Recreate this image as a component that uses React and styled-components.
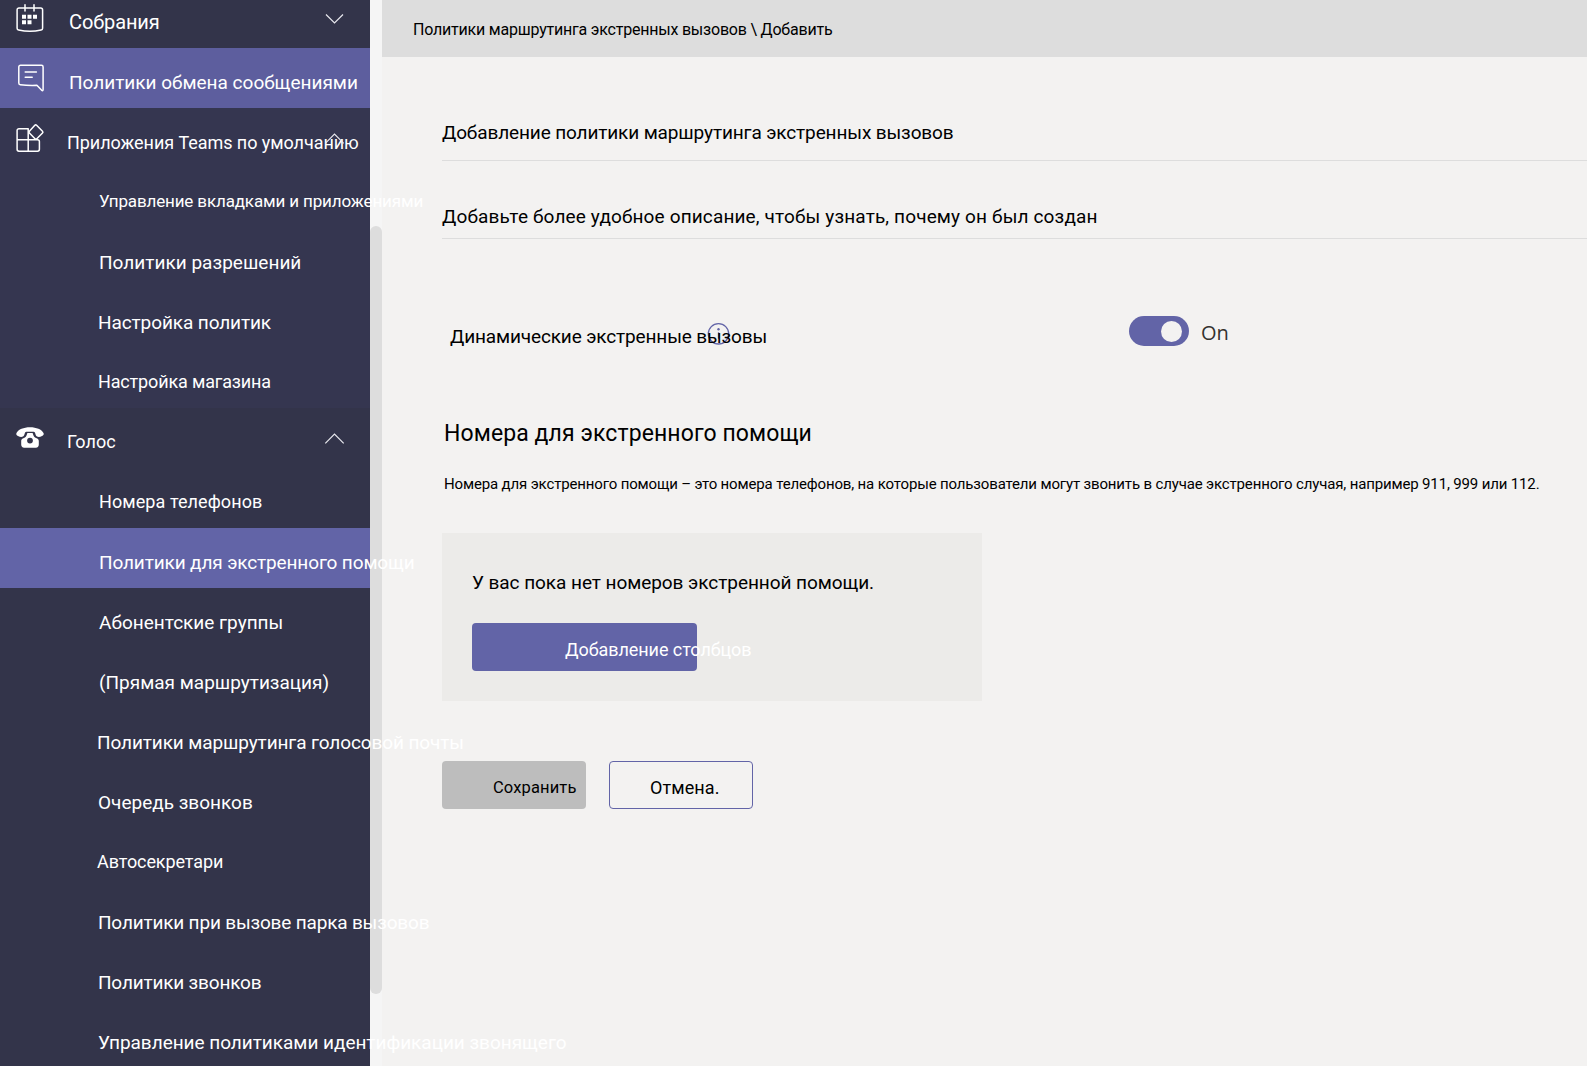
import React from 'react';
import styled, { createGlobalStyle } from 'styled-components';

const GlobalStyle = createGlobalStyle`
  html, body { height: 100%; }
  body {
    margin: 0;
    overflow: hidden;
    background: #f3f2f1;
    font-family: Roboto, 'Noto Sans', sans-serif;
    color: #000;
  }
  *, *::before, *::after { box-sizing: border-box; }
`;

const Page = styled.div`
  display: flex;
  width: 100%;
  height: 100vh;
  overflow: hidden;
`;

/* ---------- sidebar ---------- */

const Sidebar = styled.nav`
  position: relative;
  z-index: 1;
  flex: 0 0 370px;
  min-width: 0;
  width: 370px;
  height: 100%;
  background: #33344a;
  color: #fff;
`;

const NavList = styled.div`
  display: flex;
  flex-direction: column;
  width: 370px;
  margin-top: -12px;
`;

const rowColors = {
  base: '#33344a',
  group: '#353650',
  soft: '#5d5e9e',
  active: '#6264a7',
};

const NavRow = styled.div`
  position: relative;
  display: flex;
  flex: 0 0 60px;
  width: 370px;
  height: 60px;
  padding-left: ${p => p.$x}px;
  background: ${p => rowColors[p.$tone]};
`;

const NavLabel = styled.span`
  flex: none;
  height: 60px;
  margin-top: ${p => p.$dy}px;
  font-size: ${p => p.$size}px;
  line-height: ${p => (p.$size === 18 || p.$size === 19 ? 61 : 60)}px;
  letter-spacing: ${p => p.$ls}px;
  white-space: nowrap;
`;

const NavIcon = styled.svg`
  position: absolute;
  left: 15px;
  top: 15px;
  width: 30px;
  height: 30px;
  fill: none;
  stroke: #fff;
  stroke-width: 1.5;
  stroke-linejoin: round;
  stroke-linecap: round;
`;

const Chevron = styled.svg`
  position: absolute;
  left: 324px;
  top: 25px;
  width: 21px;
  height: 12px;
  fill: none;
  stroke: #e8e8ee;
  stroke-width: 1.2;
`;

const ScrollTrack = styled.div`
  flex: 0 0 12px;
  height: 100%;
  padding-top: 226px;
  background: #f5f5f5;
`;

const ScrollThumb = styled.div`
  height: 768px;
  border-radius: 6px;
  background: #dddddd;
`;

/* ---------- main ---------- */

const Main = styled.main`
  flex: 1;
  min-width: 0;
  overflow: hidden;
  background: #f3f2f1;
`;

const Breadcrumb = styled.header`
  height: 57px;
  padding: 1px 0 0 31px;
  background: #dddddd;
  font-size: 16px;
  line-height: 57px;
  letter-spacing: -0.21px;
  white-space: nowrap;
`;

const Content = styled.div`
  display: flex;
  flex-direction: column;
  padding-left: 60px;
`;

const Field = styled.div`
  padding: ${p => p.$top}px 0 ${p => p.$bottom}px;
  border-bottom: 1px solid #dddddd;
  font-size: 19px;
  line-height: 23px;
  letter-spacing: ${p => p.$ls}px;
  white-space: nowrap;
`;

const SettingRow = styled.div`
  display: flex;
  height: 30px;
  margin-top: 77px;
  padding-left: 8px;
`;

const SettingLabel = styled.div`
  position: relative;
  isolation: isolate;
  flex: 0 0 679px;
  padding-top: 9px;
  font-size: 19px;
  line-height: 23px;
  letter-spacing: -0.14px;
`;

const InfoIcon = styled.svg`
  position: absolute;
  left: 257px;
  top: 6px;
  z-index: -1;
  width: 23px;
  height: 23px;
  fill: none;
  stroke: #6264a7;
  stroke-width: 1.3;
`;

const Toggle = styled.div`
  display: flex;
  align-items: center;
  justify-content: flex-end;
  width: 60px;
  height: 30px;
  padding-right: 7px;
  border-radius: 15px;
  background: #6264a7;
`;

const Knob = styled.span`
  width: 21px;
  height: 21px;
  border-radius: 50%;
  background: #f3f2f1;
`;

const ToggleText = styled.span`
  margin-left: 12px;
  padding-top: 3px;
  font-family: 'Open Sans', sans-serif;
  font-size: 20px;
  line-height: 28px;
  color: #33322f;
`;

const Heading = styled.h2`
  margin: 74px 0 0 2px;
  font-size: 23px;
  font-weight: 400;
  line-height: 27px;
  letter-spacing: 0.1px;
`;

const Description = styled.p`
  margin: 28px 0 0 2px;
  font-size: 15px;
  line-height: 18px;
  letter-spacing: -0.15px;
  white-space: nowrap;
`;

const Card = styled.section`
  width: 540px;
  height: 168px;
  margin-top: 40px;
  padding: 38px 30px 30px;
  background: #ecebe9;
`;

const CardText = styled.div`
  font-size: 19px;
  line-height: 23px;
  letter-spacing: -0.06px;
  white-space: nowrap;
`;

const Button = styled.button`
  display: block;
  width: ${p => p.$w}px;
  height: 48px;
  margin: ${p => p.$mt || 0}px 0 0;
  padding: ${p => p.$pad};
  border: ${p => (p.$outline ? '1px solid #6264a7' : '0')};
  border-radius: 4px;
  background: ${p => p.$bg};
  color: ${p => p.$color};
  font-family: inherit;
  font-size: ${p => p.$size}px;
  line-height: 21px;
  letter-spacing: ${p => p.$ls}px;
  text-align: left;
  white-space: nowrap;
`;

const ButtonText = styled.span`
  display: block;
  height: 21px;
`;

const Actions = styled.div`
  display: flex;
  gap: 23px;
  margin-top: 60px;
`;

/* ---------- icons ---------- */

const CalendarIcon = () => (
  <NavIcon viewBox="0 0 30 30">
    <path d="M4 5h21.700a1.900 1.900 0 0 1 1.900 1.900v18.300a1.800 1.800 0 0 1-1.500 1.800q-11 2.400-22.500 0a1.800 1.800 0 0 1-1.500-1.800V6.900A1.900 1.900 0 0 1 4 5z" />
    <path d="M10 1.800v6.200M19 1.800v6.200" />
    <path
      d="M7 11.800h4v4H7zM12.500 11.800h4v4h-4zM18 11.800h4v4h-4zM7 17.300h4v4H7zM12.500 17.300h4v4h-4z"
      fill="#fff"
      stroke="none"
    />
  </NavIcon>
);

const MessageIcon = () => (
  <NavIcon viewBox="0 0 30 30">
    <path d="M5.500 2.300h21a1.600 1.600 0 0 1 1.600 1.600v22.600q0 1.800-1.400.8l-4.800-5Q13 22.600 5.300 21.800a1.700 1.700 0 0 1-1.500-1.700V4a1.700 1.700 0 0 1 1.700-1.700z" />
    <path d="M10.200 9h11.200M10.200 14.200h7" />
  </NavIcon>
);

const AppsIcon = () => (
  <NavIcon viewBox="0 0 30 30">
    <path d="M13.200 5.700H4a1.900 1.900 0 0 0-1.900 1.900v18.700A1.900 1.900 0 0 0 4 28.200h18.500a1.900 1.900 0 0 0 1.900-1.900v-7.700a1.900 1.900 0 0 0-1.900-1.900H2.100M13.200 5.700v22.500" />
    <path d="m21.600 2.300 5.900 5.900a1.300 1.300 0 0 1 0 1.800l-5.700 5.700a1.300 1.300 0 0 1-1.800 0l-5.600-5.700a1.300 1.300 0 0 1 0-1.800l5.400-5.900a1.300 1.300 0 0 1 1.800 0z" />
  </NavIcon>
);

const PhoneIcon = () => (
  <NavIcon viewBox="0 0 30 30">
    <g fill="#fff" stroke="none">
      <path d="M15 4.300c6.500 0 11.600 2.200 13.500 5.700.7 1.300-.1 2.300-1.500 3.100-1.600.9-3.600 1.300-5 .5-1.500-.8-1.400-2.700-2-3.900-.3-.7-1-.9-1.800-.9h-6.400c-.8 0-1.500.2-1.800.9-.6 1.200-.5 3.100-2 3.900-1.400.8-3.400.4-5-.5-1.400-.8-2.200-1.800-1.500-3.100C3.400 6.500 8.500 4.300 15 4.300z" />
      <path
        fillRule="evenodd"
        d="M12.400 10h5.200l.9 2.600c.4 1.200 1.200 1.900 2.500 2.300 2 .6 2.800 1.500 2.800 3v3.700c0 2-1 3.200-3 3.200H9.200c-2 0-3-1.200-3-3.200v-3.700c0-1.500.8-2.400 2.800-3 1.300-.4 2.100-1.100 2.500-2.300zM15 14.700a2.900 2.900 0 1 0 0 5.800 2.900 2.900 0 0 0 0-5.800z"
      />
    </g>
  </NavIcon>
);

const ChevronMark = ({ dir }) => (
  <Chevron viewBox="0 0 21 12">
    <path d={dir === 'down' ? 'M2 1.500 10.500 10 19 1.500' : 'M1.300 10.300 10.500 1 19.700 10.300'} />
  </Chevron>
);

/* ---------- data ---------- */

const navItems = [
  { text: 'Собрания', tone: 'base', x: 69, size: 20, ls: -0.1, dy: 4, icon: <CalendarIcon />, chevron: 'down' },
  { text: 'Политики обмена сообщениями', tone: 'soft', x: 69, size: 19, ls: 0, dy: 4, icon: <MessageIcon /> },
  { text: 'Приложения Teams по умолчанию', tone: 'group', x: 67, size: 18, ls: -0.06, dy: 4, icon: <AppsIcon />, chevron: 'up' },
  { text: 'Управление вкладками и приложениями', tone: 'group', x: 99, size: 17, ls: -0.14, dy: 3 },
  { text: 'Политики разрешений', tone: 'group', x: 99, size: 19, ls: 0.02, dy: 4 },
  { text: 'Настройка политик', tone: 'group', x: 98, size: 19, ls: -0.1, dy: 4 },
  { text: 'Настройка магазина', tone: 'group', x: 98, size: 18, ls: -0.15, dy: 3 },
  { text: 'Голос', tone: 'base', x: 67, size: 18, ls: 0, dy: 3, icon: <PhoneIcon />, chevron: 'up' },
  { text: 'Номера телефонов', tone: 'base', x: 99, size: 18, ls: 0.08, dy: 3 },
  { text: 'Политики для экстренного помощи', tone: 'active', x: 99, size: 19, ls: -0.13, dy: 4 },
  { text: 'Абонентские группы', tone: 'base', x: 99, size: 19, ls: 0, dy: 4 },
  { text: '(Прямая маршрутизация)', tone: 'base', x: 99, size: 19, ls: 0, dy: 4 },
  { text: 'Политики маршрутинга голосовой почты', tone: 'base', x: 97, size: 19, ls: -0.11, dy: 4 },
  { text: 'Очередь звонков', tone: 'base', x: 98, size: 19, ls: 0, dy: 4 },
  { text: 'Автосекретари', tone: 'base', x: 97, size: 18, ls: -0.1, dy: 3 },
  { text: 'Политики при вызове парка вызовов', tone: 'base', x: 98, size: 19, ls: -0.18, dy: 4 },
  { text: 'Политики звонков', tone: 'base', x: 98, size: 19, ls: -0.18, dy: 4 },
  { text: 'Управление политиками идентификации звонящего', tone: 'base', x: 98, size: 19, ls: -0.03, dy: 4 },
];

export default function App() {
  return (
    <Page>
      <GlobalStyle />
      <Sidebar>
        <NavList>
          {navItems.map(item => (
            <NavRow key={item.text} $tone={item.tone} $x={item.x}>
              {item.icon}
              <NavLabel $size={item.size} $ls={item.ls} $dy={item.dy}>
                {item.text}
              </NavLabel>
              {item.chevron && <ChevronMark dir={item.chevron} />}
            </NavRow>
          ))}
        </NavList>
      </Sidebar>
      <ScrollTrack>
        <ScrollThumb />
      </ScrollTrack>
      <Main>
        <Breadcrumb>{'Политики маршрутинга экстренных вызовов \\ Добавить'}</Breadcrumb>
        <Content>
          <Field $top={64} $bottom={16} $ls={-0.13}>
            Добавление политики маршрутинга экстренных вызовов
          </Field>
          <Field $top={44} $bottom={10} $ls={0.14}>
            Добавьте более удобное описание, чтобы узнать, почему он был создан
          </Field>
          <SettingRow>
            <SettingLabel>
              Динамические экстренные вызовы
              <InfoIcon viewBox="0 0 23 23">
                <circle cx="11.500" cy="11.800" r="10.200" />
                <path d="M11.500 10.300v6.400" />
                <circle cx="11.500" cy="7.300" r="1.200" fill="#6264a7" stroke="none" />
              </InfoIcon>
            </SettingLabel>
            <Toggle>
              <Knob />
            </Toggle>
            <ToggleText>On</ToggleText>
          </SettingRow>
          <Heading>Номера для экстренного помощи</Heading>
          <Description>
            Номера для экстренного помощи – это номера телефонов, на которые пользователи могут звонить в
            случае экстренного случая, например 911, 999 или 112.
          </Description>
          <Card>
            <CardText>У вас пока нет номеров экстренной помощи.</CardText>
            <Button $w={225} $mt={29} $pad="4px 0 0 93px" $bg="#6264a7" $color="#fff" $size={18} $ls={-0.07}>
              <ButtonText>Добавление столбцов</ButtonText>
            </Button>
          </Card>
          <Actions>
            <Button $w={144} $pad="4px 0 0 51px" $bg="#bdbdbd" $color="#000" $size={16.5} $ls={0.13}>
              <ButtonText>Сохранить</ButtonText>
            </Button>
            <Button $w={144} $pad="4px 0 0 40px" $outline $bg="transparent" $color="#000" $size={18} $ls={0.1}>
              <ButtonText>Отмена.</ButtonText>
            </Button>
          </Actions>
        </Content>
      </Main>
    </Page>
  );
}
